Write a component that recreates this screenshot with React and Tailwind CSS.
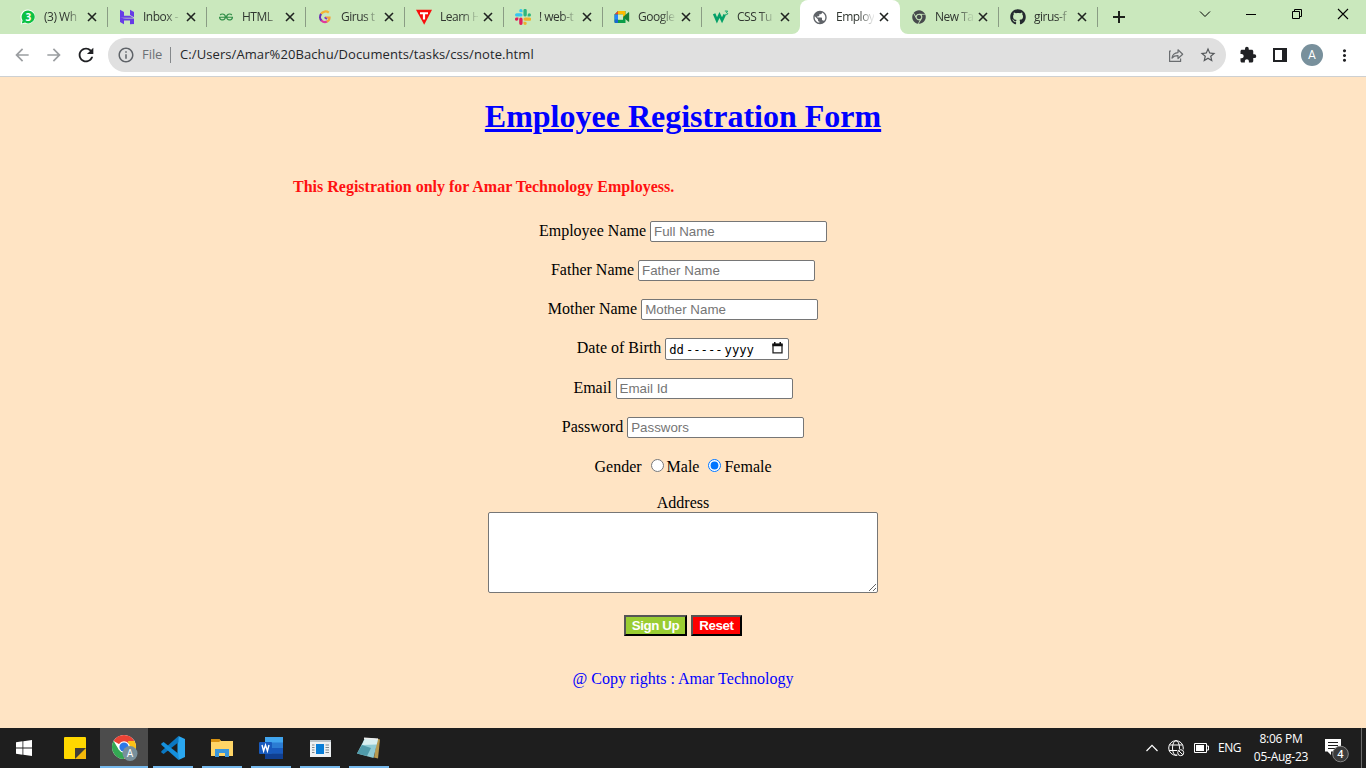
import React from "react";
import { MdArrowBack, MdArrowForward, MdRefresh, MdInfoOutline, MdStarBorder, MdExtension, MdMoreVert, MdPublic } from "react-icons/md";
import { SiGeeksforgeeks } from "react-icons/si";
import { FaGithub, FaChrome } from "react-icons/fa";

const WhatsAppIcon = () => (
  <svg width="16" height="16" viewBox="0 0 16 16">
    <path d="M8.2.5a7.3 7.3 0 1 1-3.2 14L.6 15.6l1-4A7.3 7.3 0 0 1 8.2.5z" fill="#fff" />
    <path d="M8.2 1.4a6.5 6.5 0 1 1-3.1 12.2L1.8 14.5l.8-3.2A6.5 6.5 0 0 1 8.2 1.4z" fill="#0dc143" />
    <text x="8.3" y="11.6" textAnchor="middle" fontSize="10" fontWeight="700" fontFamily="Open Sans, sans-serif" fill="#fff">3</text>
  </svg>
);

const HostingerIcon = () => (
  <svg width="16" height="16" viewBox="0 0 16 16" fill="#673de6">
    <path d="M1 .8l4 2.1v3.8h5.8l3.7 2.1H1z" />
    <path d="M11 .8l4 2.1v5.3l-4-2.1z" />
    <path d="M1 7.9v5.2l4 2.1V11.6h6v3.6l4-.1V9.6H4.6z" />
    <path d="M1 9.1h3.6l3.4 1.2H15v5L11 13.3V11H1z" opacity=".4" />
  </svg>
);

const GirusIcon = () => (
  <svg width="16" height="16" viewBox="0 0 16 16" fill="none" strokeWidth="2.2">
    <path d="M11.8 3.6A5.300 5.300 0 0 0 4 5" stroke="#f5b335" />
    <path d="M4.100 4.800a5.300 5.300 0 0 0 .6 7" stroke="#6a2fb5" />
    <path d="M4.400 11.500a5.300 5.300 0 0 0 5.700 1.100" stroke="#e0389d" />
    <path d="M9.800 12.700c1.900-.8 2.700-2.300 2.700-4.200H8" stroke="#f4a23b" />
    <path d="M7.600 8.300l2.300 1.900" stroke="#7c35c9" strokeWidth="1.600" />
  </svg>
);

const TIcon = () => (
  <svg width="16" height="16" viewBox="0 0 16 16">
    <path d="M0 .8h16L8.200 15.800z" fill="#f80d0d" />
    <path d="M4 3.300h8v2H9.100v5.200H6.900V5.300H4z" fill="#fff" />
  </svg>
);

const SlackIcon = () => (
  <svg width="16" height="16" viewBox="0 0 24 24">
    <path fill="#e01e5a" d="M5.040 15.160a2.530 2.530 0 1 1-2.520-2.520h2.520zM6.310 15.160a2.520 2.520 0 0 1 5.050 0v6.320a2.520 2.520 0 1 1-5.050 0z" />
    <path fill="#36c5f0" d="M8.830 5.040a2.520 2.520 0 1 1 2.530-2.520v2.520zM8.830 6.310a2.520 2.520 0 0 1 0 5.050H2.520a2.520 2.520 0 1 1 0-5.050z" />
    <path fill="#2eb67d" d="M18.960 8.830a2.520 2.520 0 1 1 2.520 2.530h-2.520zM17.690 8.830a2.530 2.530 0 0 1-5.050 0V2.520a2.530 2.530 0 1 1 5.050 0z" />
    <path fill="#ecb22e" d="M15.160 18.960a2.520 2.520 0 1 1-2.520 2.520v-2.520zM15.160 17.690a2.530 2.530 0 0 1 0-5.050h6.320a2.530 2.530 0 1 1 0 5.050z" />
  </svg>
);

const MeetIcon = () => (
  <svg width="16" height="16" viewBox="0 0 16 16">
    <path d="M4 2h7.500v12H1.500A1 1 0 0 1 .5 13V5.500z" fill="#0a9d48" />
    <path d="M4 2v3.500H.5z" fill="#ea4335" />
    <path d="M.5 5.500H4v5.300H.5z" fill="#2684fc" />
    <path d="M.5 10.800H4V14H1.500a1 1 0 0 1-1-1z" fill="#1967d2" />
    <path d="M4 2h6.500a1 1 0 0 1 1 1v4.200L9 8.500V5.500H4z" fill="#ffba00" />
    <path d="M4 5.500h5v5.300H4z" fill="#cfe9c4" />
    <path d="M9 8l5.200-4.600c.5-.4 1-.2 1 .4v8.400c0 .6-.5.800-1 .4z" fill="#188038" />
  </svg>
);

const W3Icon = () => (
  <svg width="17" height="16" viewBox="0 0 17 16" fill="none" stroke="#04a068">
    <path d="M1.200 4.500l3 7 2.700-5.600 2.700 5.600 2.800-6" strokeWidth="2.800" />
    <path d="M12.600 1.700h3l-1.500 1.700c1 0 1.500.4 1.500 1.100 0 1-1.700 1.300-2.600.6" strokeWidth="1" />
  </svg>
);

const tabs = [
  { t: "(3) Wh", icon: <WhatsAppIcon /> },
  { t: "Inbox -", icon: <HostingerIcon /> },
  { t: "HTML", icon: <SiGeeksforgeeks size={14} color="#2f8d46" /> },
  { t: "Girus t", icon: <GirusIcon /> },
  { t: "Learn H", icon: <TIcon /> },
  { t: "! web-t", icon: <SlackIcon /> },
  { t: "Google", icon: <MeetIcon /> },
  { t: "CSS Tu", icon: <W3Icon /> },
  { t: "Employ", icon: <MdPublic size={17} color="#5f6368" />, active: true },
  { t: "New Ta", icon: <FaChrome size={14} color="#474a4d" /> },
  { t: "girus-f", icon: <FaGithub size={16} color="#24292f" /> },
];

function Tab({ t, icon, active, bare }) {
  return (
    <div className={"relative flex h-[34px] shrink-0 items-center " + (active ? "-ml-px w-[100px] rounded-t-lg bg-white pl-3" : "w-[99px] pl-[11px]")}>
      <span className="flex h-4 w-4 shrink-0 items-center justify-center">{icon}</span>
      <span className="ml-2 w-[38px] whitespace-nowrap text-[12px] tracking-[-0.500px] text-[#303630] [mask-image:linear-gradient(to_right,#000_60%,#0002_95%)]">{t}</span>
      <svg className="ml-[5px] shrink-0" width="10" height="10" viewBox="0 0 10 10" stroke="#1f2320" strokeWidth="1.600"><path d="M1 1l8 8M9 1L1 9" /></svg>
      {active && (
        <>
          <svg className="absolute bottom-0 -left-2" width="8" height="8"><path d="M8 0v8H0a8 8 0 0 0 8-8z" fill="#fff" /></svg>
          <svg className="absolute -right-2 bottom-0" width="8" height="8"><path d="M0 0v8h8a8 8 0 0 1-8-8z" fill="#fff" /></svg>
        </>
      )}
      {!active && !bare && <span className="ml-auto h-5 w-px bg-[#8a9c84]" />}
    </div>
  );
}

function Browser() {
  return (
    <header className="shrink-0 font-['Open_Sans',sans-serif]">
      <div className="flex h-[34px] items-center bg-[#cae8bd] pl-[9px]">
        {tabs.map((x, i) => <Tab key={x.t} {...x} bare={i === 7} />)}
        <svg className="ml-[15px]" width="12" height="12" viewBox="0 0 12 12" stroke="#1d211b" strokeWidth="2"><path d="M6 0v12M0 6h12" /></svg>
        <div className="ml-auto flex items-center gap-[34px] pr-[17px] pb-[6px] text-black">
          <svg width="12" height="12" viewBox="0 0 12 12" fill="none" stroke="currentColor"><path d="M1 3.500l5 5 5-5" /></svg>
          <svg width="12" height="12" viewBox="0 0 12 12" stroke="currentColor"><path d="M1 6.500h10" /></svg>
          <svg width="12" height="12" viewBox="0 0 12 12" fill="none" stroke="currentColor"><path d="M1.500 3.500h7v7h-7zM3.500 3.500v-2h7v7h-2" /></svg>
          <svg width="12" height="12" viewBox="0 0 12 12" stroke="currentColor" strokeWidth="1.100"><path d="M1 1l10 10M11 1L1 11" /></svg>
        </div>
      </div>
      <div className="flex h-[43px] items-center border-b border-[#cdd0d2] bg-white pl-3">
        <MdArrowBack size={20} color="#9b9ea1" />
        <MdArrowForward size={20} color="#9b9ea1" className="ml-3" />
        <MdRefresh size={22} color="#1f2023" className="ml-[11px]" />
        <div className="ml-[11px] flex h-[34px] w-[1118px] items-center rounded-full bg-[#e0e0e0] pr-[9px] pl-[9px] text-[13px]">
          <MdInfoOutline size={18} color="#5f6368" />
          <span className="ml-[7px] w-[21px] tracking-[-0.050px] text-[#6c7075]">File</span>
          <span className="ml-[7px] h-4 w-px bg-[#85888b]" />
          <span className="ml-[9px] whitespace-nowrap tracking-[0.090px] text-[#25272a]">C:/Users/Amar%20Bachu/Documents/tasks/css/note.html</span>
          <svg className="ml-auto" width="16" height="16" viewBox="0 0 16 16" fill="none" stroke="#6a6d70" strokeWidth="1.200"><path d="M3 4H1.600v10.400h11v-3M4 11c.5-3.500 2.500-5.200 6-5.400V2.800l4.700 4.400L10 11.500V8.700c-2.500-.1-4.300.5-6 2.300z" strokeLinejoin="round" /></svg>
          <MdStarBorder size={18} color="#55585b" className="ml-[15px]" />
        </div>
        <MdExtension size={18} color="#202124" className="ml-[13px]" />
        <svg className="ml-[16px]" width="14" height="14" viewBox="0 0 14 14"><path d="M1 1h12v12H1z" fill="none" stroke="#202124" strokeWidth="2" /><path d="M9 1h4v12H9z" fill="#202124" /></svg>
        <span className="ml-[14px] flex h-[22px] w-[22px] items-center justify-center rounded-full bg-[#78909c] font-['Roboto',sans-serif] text-[12px] text-white">A</span>
        <MdMoreVert size={19} color="#202124" className="ml-[12px]" />
      </div>
    </header>
  );
}

const box = "rounded-[2px] border border-[#767676] bg-white";

function Field({ label, placeholder, mt, type = "text" }) {
  return (
    <label className={"flex h-[21px] items-center justify-center gap-1 " + mt}>
      <span className="-mt-px">{label}</span>
      <input type={type} placeholder={placeholder} className={box + " h-[21px] w-[177px] px-[3px] py-0 font-['Liberation_Sans',Arial,sans-serif] text-[13.333px] placeholder:text-[#757575]"} />
    </label>
  );
}

function Form() {
  return (
    <main className="flex flex-1 flex-col bg-[#ffe4c4] font-['Liberation_Serif','Times_New_Roman',serif] text-[16px] leading-[18px] text-black">
      <h1 className="mt-[21px] text-center text-[32px] leading-[37px] font-bold text-[#0000ff] underline">Employee Registration Form</h1>
      <p className="mt-[43px] ml-[293px] font-bold text-[#ff1111]">This Registration only for Amar Technology Employess.</p>
      <Field label="Employee Name" placeholder="Full Name" mt="mt-[25px]" />
      <Field label="Father Name" placeholder="Father Name" mt="mt-[18px]" />
      <Field label="Mother Name" placeholder="Mother Name" mt="mt-[18px]" />
      <div className="mt-[18px] flex h-[22px] items-center justify-center gap-1">
        <span className="-mt-[3px]">Date of Birth</span>
        <div className={box + " flex h-[22px] w-[124px] items-center pr-[5px] pl-[3px] font-['DejaVu_Sans_Mono',monospace] text-[12.200px]"}>
          <span className="mt-[2px]">dd</span><span className="mt-[2px] ml-[2px]">-----</span><span className="mt-[2px] ml-[2px]">yyyy</span>
          <svg className="mb-[2px] ml-auto" width="11" height="12" viewBox="0 0 11 12"><path d="M1 2.500h9v8.300H1z" fill="none" stroke="#222" strokeWidth="1.300" /><path d="M.4 1.500h10.200v2.700H.4zM2 0h1.500v2H2zM7.500 0H9v2H7.500z" fill="#111" /></svg>
        </div>
      </div>
      <Field label="Email" placeholder="Email Id" mt="mt-[18px]" />
      <Field label="Password" placeholder="Passwors" type="password" mt="mt-[18px]" />
      <div className="mt-5 flex h-[18px] items-center justify-center">
        <span>Gender</span>
        <input type="radio" name="gender" className="mb-[3px] ml-[9px] h-[13px] w-[13px]" />
        <span className="ml-[3px]">Male</span>
        <input type="radio" name="gender" defaultChecked className="mb-[3px] ml-[9px] h-[13px] w-[13px]" />
        <span className="ml-[3px]">Female</span>
      </div>
      <label className="mt-[18px] flex flex-col items-center">
        <span>Address</span>
        <textarea className={box + " h-[81px] w-[390px] resize"} />
      </label>
      <div className="mt-[22px] flex justify-center gap-1 font-['Liberation_Sans',Arial,sans-serif] text-[13.333px] leading-[15px] text-white">
        <button className="flex h-[21px] w-[63px] items-center justify-center border-2 border-t-[#555] border-r-black border-b-black border-l-[#555] bg-[#9acd32] font-bold tracking-[-0.400px]"><span className="whitespace-nowrap">Sign Up</span></button>
        <button className="flex h-[21px] w-[51px] items-center justify-center border-2 border-t-[#555] border-r-black border-b-black border-l-[#555] bg-[#ff0000] font-bold tracking-[-0.400px]">Reset</button>
      </div>
      <p className="mt-[34px] text-center text-[#0000ff]">@ Copy rights : Amar Technology</p>
    </main>
  );
}

const apps = [
  { n: "start", icon: <svg width="16" height="16" viewBox="0 0 16 16" fill="#fff"><path d="M0 2.200l6.500-.9v6.300H0zM7.300 1.200L16 0v7.600H7.300zM0 8.400h6.500v6.300L0 13.800zM7.300 8.400H16V16l-8.700-1.200z" /></svg> },
  { n: "notes", wide: true, icon: <svg width="22" height="22" viewBox="0 0 22 22"><path d="M1 0h20a1 1 0 0 1 1 1v20a1 1 0 0 1-1 1H1a1 1 0 0 1-1-1V1a1 1 0 0 1 1-1z" fill="#ffd800" /><path d="M11 22L22 11v11z" fill="#f5b90a" /><path d="M11 11h11L11 22z" fill="#403d38" /></svg> },
  {
    n: "chrome", open: true, active: true, icon: (
      <svg width="28" height="28" viewBox="0 0 28 28">
        <circle cx="14" cy="13" r="12" fill="#fff" />
        <path d="M14 13L3.600 7a12 12 0 0 1 20.800 0z" fill="#ea4335" />
        <path d="M3.600 7A12 12 0 0 0 14 25l5-9-10 0z" fill="#34a853" />
        <path d="M24.400 7A12 12 0 0 1 14 25l5.200-9L18 7z" fill="#fbc116" />
        <circle cx="14" cy="13" r="5.800" fill="#fff" /><circle cx="14" cy="13" r="4.600" fill="#2d78e8" />
        <circle cx="20" cy="19.500" r="7.500" fill="#78909c" />
        <text x="20" y="23" textAnchor="middle" fontSize="10" fontFamily="Roboto, sans-serif" fill="#fff">A</text>
      </svg>)
  },
  { n: "code", open: true, icon: <svg width="24" height="24" viewBox="0 0 24 24"><path d="M17.500 0L24 3v18l-6.500 3-1-5.500v-13z" fill="#2aa7f0" /><path d="M17.500 0v6.300L2.600 18 .3 16.400v-1.200z" fill="#0b78c2" /><path d="M17.500 24v-6.300L2.600 6 .3 7.600v1.200z" fill="#1590dc" /></svg> },
  { n: "files", open: true, icon: <svg width="22" height="20" viewBox="0 0 22 20"><path d="M0 1h8l2 2h12v15H0z" fill="#ffd566" /><path d="M0 1h8l2 1.500-2 1.500H0z" fill="#d89211" /><path d="M4 11h14v8h-4v-4H8v4H4z" fill="#3a97dc" /></svg> },
  { n: "word", open: true, icon: <svg width="24" height="22" viewBox="0 0 24 22"><rect x="6" width="18" height="22" rx="1" fill="#2b7cd3" /><path d="M6 0h18v5.500H6z" fill="#41a5ee" /><path d="M6 11h18v5.500H6z" fill="#185abd" /><path d="M6 16.500h18V22H6z" fill="#103f91" /><rect y="5" width="13" height="12" rx="1" fill="#185abd" /><path d="M3 8l1.600 6L6.500 8l1.900 6L10 8" fill="none" stroke="#fff" strokeWidth="1.400" /></svg> },
  { n: "viewer", open: true, icon: <svg width="21" height="17" viewBox="0 0 21 17"><path d="M0 0h21v17H0z" fill="#edf0f2" /><path d="M0 0h21v2H0z" fill="#b9c1c6" /><path d="M6 4h8v10H6z" fill="#087dd7" /><path d="M2 5h2.500M2 7.500h2.500M2 10h2.500M2 12.500h2.500M15.500 5H19M15.500 7.500H19M15.500 10H19M15.500 12.500H19" stroke="#7d878d" /></svg> },
  { n: "notepad", open: true, icon: <svg width="24" height="22" viewBox="0 0 24 22"><path d="M20 1.500l3 1-2 19-4-1z" fill="#b7994f" /><path d="M8 1l13 1-4.500 19L0 16.500z" fill="#8fcbd4" /><path d="M8 1l13 1-1.300 5.500L5 8z" fill="#d8eff0" /><path d="M5 8l9 3-4 8L0 16.500z" fill="#509baa" /><path d="M7 1.200l14 1" stroke="#eee" strokeWidth="1.500" /></svg> },
];

function Taskbar() {
  return (
    <footer className="flex h-10 shrink-0 bg-[#1e1e1e] font-['Open_Sans',sans-serif] text-[12px] text-white">
      <div className="flex gap-px">
        {apps.map((a) => (
          <div key={a.n} className={"flex h-10 w-12 flex-col items-center " + (a.active ? "bg-[#4c4c4c] " : "") + (a.wide ? "ml-[2px]" : "")}>
            <div className="flex h-[38px] items-center pt-[2px]">{a.icon}</div>
            {a.open && <div className={"h-[2px] bg-[#76b9ed] " + (a.active ? "w-12" : "w-10")} />}
          </div>
        ))}
      </div>
      <div className="ml-auto flex items-center">
        <svg width="12" height="8" viewBox="0 0 12 8" fill="none" stroke="#fff" strokeWidth="1.200"><path d="M.5 7L6 1.300 11.500 7" /></svg>
        <svg className="ml-[10px]" width="17" height="17" viewBox="0 0 17 17" fill="none" stroke="#fff"><circle cx="8" cy="8" r="7.300" /><ellipse cx="8" cy="8" rx="3.500" ry="7.300" /><path d="M1.500 5h13M1 10.500h13" /><circle cx="12.700" cy="12.700" r="4" fill="#1e1e1e" stroke="none" /><circle cx="12.700" cy="12.700" r="3" /><path d="M10.600 10.600l4.200 4.200" /></svg>
        <svg className="ml-[9px]" width="15" height="10" viewBox="0 0 15 10"><path d="M.5.500h12v9H.5zM13 3h1.500v4H13" fill="none" stroke="#fff" /><path d="M2 2h8v6H2z" fill="#fff" /></svg>
        <span className="ml-[9px] w-[24px] tracking-[-0.500px]">ENG</span>
        <div className="ml-[9px] flex w-[60px] flex-col items-center text-[12px] leading-[18px] whitespace-nowrap tracking-[-0.250px]">
          <span>8:06 PM</span><span>05-Aug-23</span>
        </div>
        <svg className="mt-[5px] ml-[13px]" width="25" height="25" viewBox="0 0 25 25"><path d="M1 1h16v12.500H7V17l-3.500-3.500H1z" fill="#fff" /><path d="M4 4.500h10M4 7.500h10M4 10.500h7" stroke="#1e1e1e" /><circle cx="16.500" cy="16" r="7.800" fill="#3b3b3b" stroke="#858585" /><text x="16.500" y="20" textAnchor="middle" fontSize="11" fontWeight="600" fontFamily="Open Sans, sans-serif" fill="#fff">4</text></svg>
        <span className="ml-[12px] mr-1 h-10 w-px bg-[#6b6b6b]" />
      </div>
    </footer>
  );
}

export default function App() {
  return (
    <div className="flex h-[768px] w-[1366px] flex-col overflow-hidden">
      <Browser />
      <Form />
      <Taskbar />
    </div>
  );
}
